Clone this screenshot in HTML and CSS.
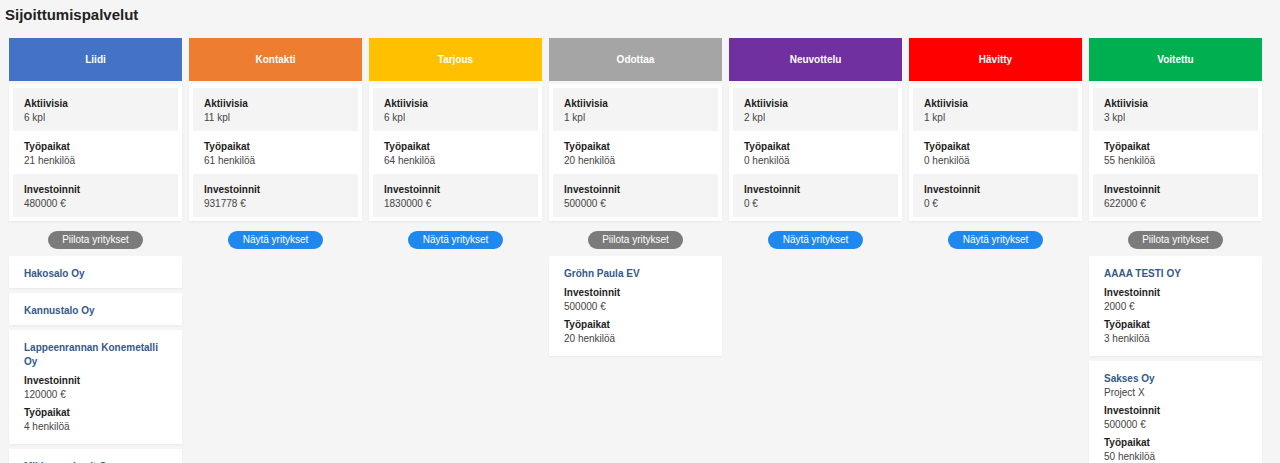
FILE: index.html
```html
<!DOCTYPE html>
<html lang="fi">
<head>
<meta charset="utf-8">
<title>Sijoittumispalvelut</title>
<link rel="stylesheet" href="styles.css">
</head>
<body>
<h1 class="title">Sijoittumispalvelut</h1>
<div class="board">

  <div class="col">
    <div class="col-head liidi">Liidi</div>
    <div class="stats">
      <div class="stat alt"><div class="lbl">Aktiivisia</div><div class="val">6 kpl</div></div>
      <div class="stat"><div class="lbl">Työpaikat</div><div class="val">21 henkilöä</div></div>
      <div class="stat alt"><div class="lbl">Investoinnit</div><div class="val">480000 €</div></div>
    </div>
    <div class="btn-row"><button class="btn hide">Piilota yritykset</button></div>
    <div class="company"><div class="name">Hakosalo Oy</div></div>
    <div class="company"><div class="name">Kannustalo Oy</div></div>
    <div class="company">
      <div class="name">Lappeenrannan Konemetalli Oy</div>
      <div class="grp"><div class="lbl">Investoinnit</div><div class="val">120000 €</div></div>
      <div class="grp"><div class="lbl">Työpaikat</div><div class="val">4 henkilöä</div></div>
    </div>
    <div class="company">
      <div class="name">Mikkonen Lasit Oy</div>
      <div class="grp"><div class="lbl">Investoinnit</div><div class="val">50000 €</div></div>
    </div>
  </div>

  <div class="col">
    <div class="col-head kontakti">Kontakti</div>
    <div class="stats">
      <div class="stat alt"><div class="lbl">Aktiivisia</div><div class="val">11 kpl</div></div>
      <div class="stat"><div class="lbl">Työpaikat</div><div class="val">61 henkilöä</div></div>
      <div class="stat alt"><div class="lbl">Investoinnit</div><div class="val">931778 €</div></div>
    </div>
    <div class="btn-row"><button class="btn show">Näytä yritykset</button></div>
  </div>

  <div class="col">
    <div class="col-head tarjous">Tarjous</div>
    <div class="stats">
      <div class="stat alt"><div class="lbl">Aktiivisia</div><div class="val">6 kpl</div></div>
      <div class="stat"><div class="lbl">Työpaikat</div><div class="val">64 henkilöä</div></div>
      <div class="stat alt"><div class="lbl">Investoinnit</div><div class="val">1830000 €</div></div>
    </div>
    <div class="btn-row"><button class="btn show">Näytä yritykset</button></div>
  </div>

  <div class="col">
    <div class="col-head odottaa">Odottaa</div>
    <div class="stats">
      <div class="stat alt"><div class="lbl">Aktiivisia</div><div class="val">1 kpl</div></div>
      <div class="stat"><div class="lbl">Työpaikat</div><div class="val">20 henkilöä</div></div>
      <div class="stat alt"><div class="lbl">Investoinnit</div><div class="val">500000 €</div></div>
    </div>
    <div class="btn-row"><button class="btn hide">Piilota yritykset</button></div>
    <div class="company">
      <div class="name">Gröhn Paula EV</div>
      <div class="grp"><div class="lbl">Investoinnit</div><div class="val">500000 €</div></div>
      <div class="grp"><div class="lbl">Työpaikat</div><div class="val">20 henkilöä</div></div>
    </div>
  </div>

  <div class="col">
    <div class="col-head neuvottelu">Neuvottelu</div>
    <div class="stats">
      <div class="stat alt"><div class="lbl">Aktiivisia</div><div class="val">2 kpl</div></div>
      <div class="stat"><div class="lbl">Työpaikat</div><div class="val">0 henkilöä</div></div>
      <div class="stat alt"><div class="lbl">Investoinnit</div><div class="val">0 €</div></div>
    </div>
    <div class="btn-row"><button class="btn show">Näytä yritykset</button></div>
  </div>

  <div class="col">
    <div class="col-head havitty">Hävitty</div>
    <div class="stats">
      <div class="stat alt"><div class="lbl">Aktiivisia</div><div class="val">1 kpl</div></div>
      <div class="stat"><div class="lbl">Työpaikat</div><div class="val">0 henkilöä</div></div>
      <div class="stat alt"><div class="lbl">Investoinnit</div><div class="val">0 €</div></div>
    </div>
    <div class="btn-row"><button class="btn show">Näytä yritykset</button></div>
  </div>

  <div class="col">
    <div class="col-head voitettu">Voitettu</div>
    <div class="stats">
      <div class="stat alt"><div class="lbl">Aktiivisia</div><div class="val">3 kpl</div></div>
      <div class="stat"><div class="lbl">Työpaikat</div><div class="val">55 henkilöä</div></div>
      <div class="stat alt"><div class="lbl">Investoinnit</div><div class="val">622000 €</div></div>
    </div>
    <div class="btn-row"><button class="btn hide">Piilota yritykset</button></div>
    <div class="company">
      <div class="name">AAAA TESTI OY</div>
      <div class="grp"><div class="lbl">Investoinnit</div><div class="val">2000 €</div></div>
      <div class="grp"><div class="lbl">Työpaikat</div><div class="val">3 henkilöä</div></div>
    </div>
    <div class="company">
      <div class="name name-sub">Sakses Oy</div>
      <div class="sub">Project X</div>
      <div class="grp"><div class="lbl">Investoinnit</div><div class="val">500000 €</div></div>
      <div class="grp"><div class="lbl">Työpaikat</div><div class="val">50 henkilöä</div></div>
    </div>
  </div>

</div>
</body>
</html>
```

FILE: styles.css
```css
html, body {
  margin: 0;
  padding: 0;
  background: #f5f5f5;
  font-family: "Liberation Sans", Arial, sans-serif;
  color: #222;
}

.title {
  margin: 0;
  padding: 6px 5px 0;
  font-size: 15px;
  line-height: 17px;
  font-weight: bold;
  color: #222;
}

.board {
  display: flex;
  gap: 7px;
  padding: 15px 0 0 9px;
  align-items: flex-start;
}

.col {
  width: 173px;
  flex: 0 0 173px;
  display: flex;
  flex-direction: column;
}

.col-head {
  height: 43px;
  display: flex;
  align-items: center;
  justify-content: center;
  color: #fff;
  font-size: 10px;
  font-weight: bold;
}

.liidi { background: #4472c4; }
.kontakti { background: #ed7d31; }
.tarjous { background: #ffc000; }
.odottaa { background: #a5a5a5; }
.neuvottelu { background: #7030a0; }
.havitty { background: #ff0000; }
.voitettu { background: #00b050; }

.stats {
  margin-top: 3px;
  background: #fff;
  padding: 4px;
  box-shadow: 0 1px 2px rgba(0, 0, 0, 0.06);
}

.stat {
  height: 43px;
  box-sizing: border-box;
  padding: 9px 11px 0;
}

.stat.alt {
  background: #f4f4f4;
}

.lbl {
  font-size: 10px;
  line-height: 14px;
  font-weight: bold;
  color: #1e1e1e;
}

.val {
  font-size: 10px;
  line-height: 14px;
  color: #444;
}

.btn-row {
  display: flex;
  justify-content: center;
  margin: 10px 0 7px;
}

.btn {
  width: 95px;
  height: 18px;
  border: none;
  border-radius: 9px;
  padding: 0;
  color: #fff;
  font-family: "Liberation Sans", Arial, sans-serif;
  font-size: 10px;
  line-height: 18px;
  cursor: pointer;
}

.btn.hide { background: #7b7b7b; }
.btn.show { background: #1f88ef; }

.company {
  background: #fff;
  padding: 11px 15px 6px;
  margin-bottom: 5px;
  box-shadow: 0 1px 2px rgba(0, 0, 0, 0.05);
}

.name {
  font-size: 10px;
  line-height: 14px;
  font-weight: bold;
  color: #34598a;
  margin-bottom: 5px;
}

.name-sub {
  margin-bottom: 0;
}

.sub {
  font-size: 10px;
  line-height: 14px;
  color: #444;
  margin-bottom: 4px;
}

.grp {
  margin-bottom: 4px;
}

.company .name:last-child {
  margin-bottom: 1px;
}
```
